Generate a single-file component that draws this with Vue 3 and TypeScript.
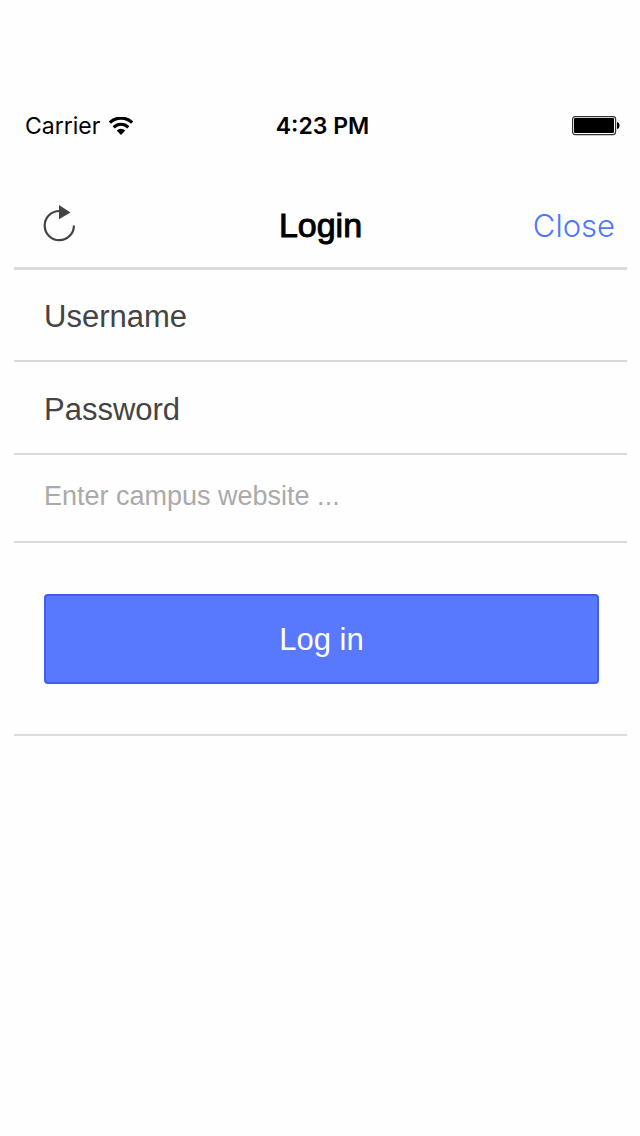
<script setup lang="ts">
import { ref } from 'vue'

const username = ref('')
const password = ref('')
const website = ref('')

function reset(): void {
  username.value = ''
  password.value = ''
  website.value = ''
}
</script>

<template>
  <div class="screen">
    <div class="status">
      <div class="carrier">
        <span>Carrier</span>
        <svg class="wifi" viewBox="0 0 24 19" aria-hidden="true">
          <path d="M0.9 5.600 A16 16 0 0 1 23.100 5.600" fill="none" stroke="#000" stroke-width="3.300" />
          <path d="M4.7 10.300 A10.4 10.4 0 0 1 19.3 10.300" fill="none" stroke="#000" stroke-width="3.100" />
          <path d="M7.7 13.5 A6 6 0 0 1 16.3 13.5 L12 18 Z" />
        </svg>
      </div>
      <span class="time">4:23 PM</span>
      <svg class="battery" viewBox="0 0 48 20" aria-hidden="true">
        <rect x="0.6" y="0.6" width="43" height="18" rx="2.5" fill="#fff" stroke="#333" stroke-width="1.2" />
        <rect x="2" y="2" width="40" height="15" rx="1" />
        <path d="M45 6 Q47.500 6.500 47.500 9.500 Q47.500 12.500 45 13 Z" />
      </svg>
    </div>

    <main class="panel">
      <header class="bar">
        <button class="refresh" type="button" aria-label="Refresh" @click="reset">
          <svg viewBox="0 0 32 37" aria-hidden="true">
            <path d="M16.300 6 A14.600 14.600 0 1 0 30.900 20.400" fill="none" stroke="#444" stroke-width="2.2" />
            <path d="M16 0 L27.500 7.400 L16 14.300 Z" fill="#444" />
          </svg>
        </button>
        <h1>Login</h1>
        <button class="close" type="button">Close</button>
      </header>

      <form @submit.prevent>
        <div class="row">
          <input v-model="username" type="text" placeholder="Username" aria-label="Username" />
        </div>
        <div class="row">
          <input v-model="password" type="password" placeholder="Password" aria-label="Password" />
        </div>
        <div class="row site">
          <input v-model="website" type="text" placeholder="Enter campus website ..." aria-label="Campus website" />
        </div>
        <div class="action">
          <button class="submit" type="submit">Log in</button>
        </div>
      </form>
    </main>
  </div>
</template>

<style>
body {
  margin: 0;
  background: #fefefe;
}
</style>

<style scoped>
.screen {
  box-sizing: border-box;
  min-height: 100vh;
  padding: 108px 13px 0 14px;
  background: #fefefe;
  font-family: "Liberation Sans", Arial, sans-serif;
}
button {
  margin: 0;
  padding: 0;
  border: 0;
  background: none;
  font-family: inherit;
  cursor: pointer;
}
.status {
  display: grid;
  grid-template-columns: 1fr auto 1fr;
  align-items: center;
  height: 36px;
  padding: 0 7px 0 11px;
  font-family: Inter, sans-serif;
  font-size: 23px;
  color: #000;
}
.carrier {
  display: flex;
  align-items: center;
  gap: 9px;
}
.wifi {
  width: 24px;
  height: 19px;
}
.time {
  font-weight: 600;
}
.battery {
  width: 48px;
  height: 20px;
  justify-self: end;
}
.bar {
  display: grid;
  grid-template-columns: 1fr auto 1fr;
  align-items: center;
  height: 84px;
  margin-top: 39px;
  border-bottom: 3px solid #dadada;
}
.refresh {
  display: flex;
  justify-self: start;
  padding: 0 0 3px 29px;
}
.refresh svg {
  width: 32px;
  height: 37px;
}
h1 {
  margin: 0;
  font-size: 34px;
  line-height: 40px;
  font-weight: 400;
  color: #000;
  -webkit-text-stroke: 1px #000;
}
.close {
  justify-self: end;
  padding: 2px 12px 0 0;
  font-family: Inter, sans-serif;
  font-size: 31px;
  line-height: 40px;
  font-weight: 300;
  color: #4f78ff;
}
.row {
  display: flex;
  height: 91px;
  border-bottom: 2px solid #d9d9da;
}
.row:first-child {
  height: 90px;
}
.row input {
  flex: 1;
  min-width: 0;
  margin: 0;
  padding: 4px 30px 0;
  border: 0;
  outline: 0;
  background: none;
  font-family: inherit;
  font-size: 31px;
  color: #444;
}
.row input::placeholder {
  color: #444;
  opacity: 1;
}
.row.site {
  height: 86px;
}
.row.site input {
  padding: 0 30px 4px;
  font-size: 27px;
}
.row.site input::placeholder {
  color: #aaa;
}
.action {
  padding: 51px 28px 50px 30px;
  border-bottom: 2px solid #dcdcdd;
}
.submit {
  display: block;
  width: 100%;
  height: 90px;
  padding-top: 2px;
  border: 2px solid #3f5bf2;
  border-radius: 4px;
  background: #5879fd;
  color: #fff;
  font-size: 31px;
}
</style>
